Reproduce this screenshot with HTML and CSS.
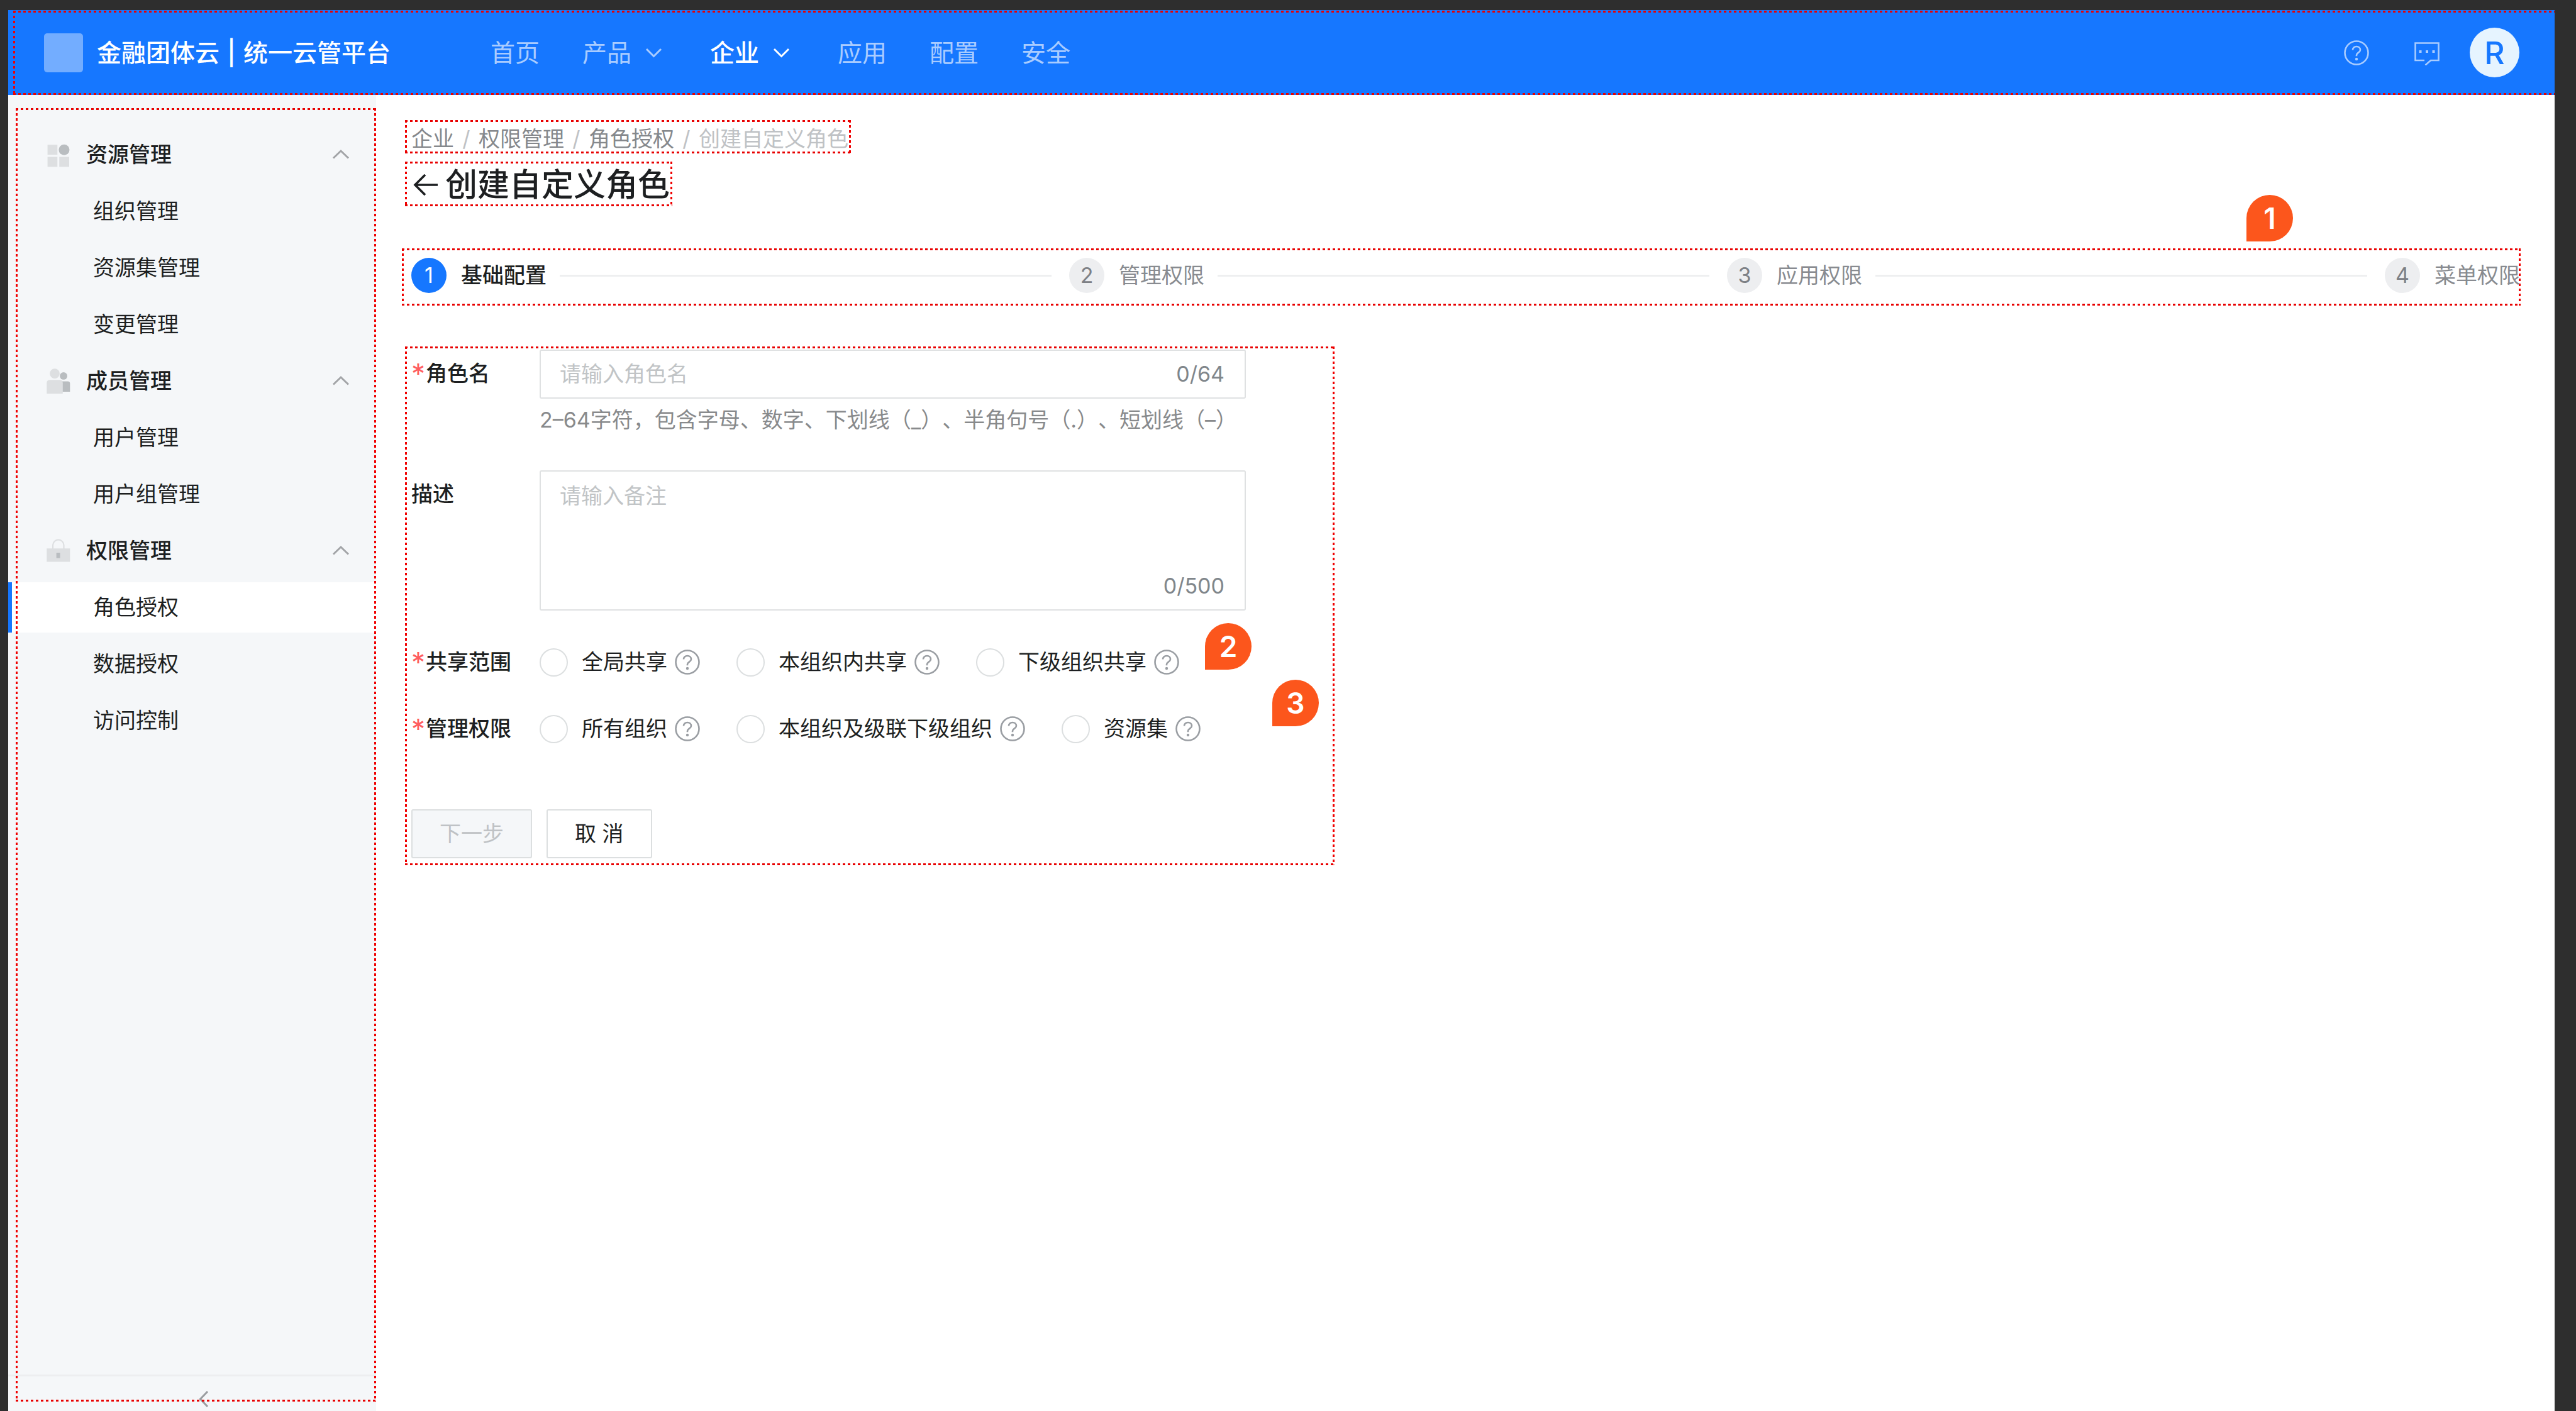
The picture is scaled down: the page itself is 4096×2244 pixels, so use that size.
FILE: index.html
```html
<!DOCTYPE html>
<html lang="zh-CN">
<head>
<meta charset="utf-8">
<title>创建自定义角色</title>
<link rel="stylesheet" href="styles.css">
</head>
<body>
<svg class="sprite" aria-hidden="true">
  <symbol id="help" viewBox="0 0 40 40">
    <circle cx="20" cy="20" r="18.5" fill="none" stroke="currentColor" stroke-width="2.6"/>
    <path d="M14 15.6c0-3.4 2.6-5.6 6-5.600s6 2.200 6 5.400c0 4-6 4.400-6 8.200v1.600" fill="none" stroke="currentColor" stroke-width="2.6"/>
    <circle cx="20" cy="30" r="2.2" fill="currentColor"/>
  </symbol>
  <symbol id="down" viewBox="0 0 37 20">
    <path d="M4 4l11.500 11.500L27 4" fill="none" stroke="currentColor" stroke-width="3"/>
  </symbol>
  <symbol id="up" viewBox="0 0 28 20">
    <path d="M2 15.500L14 4l12 11.500" fill="none" stroke="currentColor" stroke-width="3"/>
  </symbol>
</svg>
<div class="app">
  <header class="topbar outlined open-right">
    <div class="brand">
      <span class="logo"></span>
      <span class="brand-name">金融团体云<span class="bar">|</span>统一云管平台</span>
    </div>
    <nav class="topnav">
      <a href="#">首页</a>
      <a href="#">产品<svg class="caret"><use href="#down"/></svg></a>
      <a href="#" class="active">企业<svg class="caret"><use href="#down"/></svg></a>
      <a href="#">应用</a>
      <a href="#">配置</a>
      <a href="#">安全</a>
    </nav>
    <div class="tools">
      <button class="tool" aria-label="帮助"><svg class="icon"><use href="#help"/></svg></button>
      <button class="tool message" aria-label="消息"><svg class="icon" viewBox="0 0 40 40"><path d="M16 32H1.500V4.500h37V32H26L17.500 39.500" fill="none" stroke="currentColor" stroke-width="2.600"/><path d="M7.500 16h4v4h-4zM18 16h4v4h-4zM28.500 16h4v4h-4z" fill="currentColor"/></svg></button>
      <button class="avatar">R</button>
    </div>
  </header>
  <div class="body">
    <aside class="sidebar">
      <nav class="menu">
        <button class="group"><svg class="icon" viewBox="170 531 94 94"><path fill="#dddfe1" d="M176 541h37v37h-37zM176 586h37v37h-37zM220 586h37v37h-37z"/><circle cx="238" cy="560" r="20" fill="#b9bdc0"/></svg>资源管理<svg class="fold"><use href="#up"/></svg></button>
        <a href="#">组织管理</a>
        <a href="#">资源集管理</a>
        <a href="#">变更管理</a>
        <button class="group"><svg class="icon" viewBox="170 34 94 94"><circle cx="236" cy="62" r="14" fill="#b9bdc0"/><path fill="#b9bdc0" d="M228 82h24q8 0 8 8v31h-32z"/><circle cx="203" cy="53" r="18.500" fill="#dddfe1"/><path fill="#dddfe1" d="M173 128V89q0-12 12-12h36q12 0 12 12v39z"/></svg>成员管理<svg class="fold"><use href="#up"/></svg></button>
        <a href="#">用户管理</a>
        <a href="#">用户组管理</a>
        <button class="group"><svg class="icon" viewBox="170 666 94 94"><path d="M196 706v-14a20.500 20.500 0 0 1 41 0v14" fill="none" stroke="#dddfe1" stroke-width="5"/><path fill="#dddfe1" d="M173 704h87v50h-87z"/><path fill="#b9bdc0" d="M209 720h14v20h-14z"/></svg>权限管理<svg class="fold"><use href="#up"/></svg></button>
        <a href="#" class="current" aria-current="page">角色授权</a>
        <a href="#">数据授权</a>
        <a href="#">访问控制</a>
      </nav>
      <button class="collapse" aria-label="收起"><svg viewBox="0 0 16 26"><path d="M14 1L2.500 13 14 25" fill="none" stroke="currentColor" stroke-width="3"/></svg></button>
    </aside>
    <main class="main">
      <nav class="crumbs outlined">
        <a href="#">企业</a><span class="slash">/</span><a href="#">权限管理</a><span class="slash">/</span><a href="#">角色授权</a><span class="slash">/</span><span class="here">创建自定义角色</span>
      </nav>
      <div class="heading outlined">
        <a href="#" class="back" aria-label="返回"><svg viewBox="0 0 40 34"><path d="M40 17H3M20 1L4 17l16 16" fill="none" stroke="currentColor" stroke-width="3.600"/></svg></a>
        <h1>创建自定义角色</h1>
      </div>
      <ol class="steps outlined">
        <li class="on"><span class="num">1</span>基础配置</li>
        <li><span class="num">2</span>管理权限</li>
        <li><span class="num">3</span>应用权限</li>
        <li><span class="num">4</span>菜单权限</li>
        <li class="marker m1">1</li>
      </ol>
      <form class="form outlined">
        <div class="row">
          <label class="label required" for="name">角色名</label>
          <div class="field">
            <div class="box"><input id="name" type="text" placeholder="请输入角色名"><span class="count">0/64</span></div>
            <p class="hint">2–64字符，包含字母、数字、下划线（_）、半角句号（.）、短划线（–）</p>
          </div>
        </div>
        <div class="row desc">
          <label class="label" for="desc">描述</label>
          <div class="field">
            <div class="box area"><textarea id="desc" placeholder="请输入备注"></textarea><span class="count">0/500</span></div>
          </div>
        </div>
        <div class="row choices" role="radiogroup" aria-labelledby="share">
          <span class="label required" id="share">共享范围</span>
          <div class="options">
            <label><input type="radio" name="share">全局共享<svg class="icon"><use href="#help"/></svg></label>
            <label><input type="radio" name="share">本组织内共享<svg class="icon"><use href="#help"/></svg></label>
            <label><input type="radio" name="share">下级组织共享<svg class="icon"><use href="#help"/></svg></label>
          </div>
        </div>
        <div class="row choices" role="radiogroup" aria-labelledby="scope">
          <span class="label required" id="scope">管理权限</span>
          <div class="options">
            <label><input type="radio" name="scope">所有组织<svg class="icon"><use href="#help"/></svg></label>
            <label><input type="radio" name="scope">本组织及级联下级组织<svg class="icon"><use href="#help"/></svg></label>
            <label><input type="radio" name="scope">资源集<svg class="icon"><use href="#help"/></svg></label>
          </div>
        </div>
        <div class="actions">
          <button type="submit" class="next" disabled>下一步</button>
          <button type="button">取 消</button>
        </div>
        <span class="marker m2">2</span>
        <span class="marker m3">3</span>
      </form>
    </main>
  </div>
</div>
</body>
</html>
```

FILE: styles.css
```css
* { box-sizing: border-box; }

body {
  margin: 0;
  background: #2e2e2e;
  color: #1d1f21;
  font: 34px/48px Inter, "Noto Sans CJK SC", sans-serif;
  text-spacing-trim: space-all;
}

button, input, textarea { font: inherit; color: inherit; }
button { margin: 0; padding: 0; border: 0; background: none; }
a { color: inherit; text-decoration: none; }
svg { display: block; flex: none; }

.sprite { position: absolute; width: 0; height: 0; }
.icon { width: 40px; height: 40px; }

.app {
  display: flex;
  flex-direction: column;
  min-height: 100vh;
  padding: 16px 34px 0 13px;
}

/* Annotation frame drawn over a block */
.outlined { position: relative; }
.outlined::after,
.sidebar::after {
  content: "";
  position: absolute;
  inset: 0;
  pointer-events: none;
  --h: repeating-linear-gradient(90deg, #e80000 0 4px, transparent 4px 8px);
  --v: repeating-linear-gradient(180deg, #f00000 0 4px, transparent 4px 8px);
  background:
    var(--h) top / 100% 3px no-repeat,
    var(--h) bottom / 100% 3px no-repeat,
    var(--v) left / 3px 100% no-repeat,
    var(--v) right / 3px 100% no-repeat;
}
.open-right::after {
  inset: 1px 0 0 8px;
  background:
    var(--h) top / 100% 3px no-repeat,
    var(--h) bottom / 100% 3px no-repeat,
    var(--v) left / 3px 100% no-repeat;
}

/* Top bar */
.topbar {
  display: flex;
  align-items: center;
  height: 135px;
  padding: 0 56px 0 57px;
  background: #1677ff;
  color: #fff;
}
.brand { display: flex; align-items: center; gap: 22px; }
.logo { width: 62px; height: 62px; border-radius: 5px; background: #73adff; }
.brand-name { font-size: 39px; font-weight: 500; white-space: nowrap; }
.bar { display: inline-block; width: 38px; text-align: center; }
.topnav {
  display: flex;
  gap: 68px;
  margin-left: 159px;
  font-size: 39px;
  color: #a9ccff;
}
.topnav a { display: flex; align-items: center; }
.topnav .active { color: #fff; font-weight: 500; }
.caret { width: 37px; height: 20px; margin-left: 20px; }
.tools { display: flex; align-items: center; margin-left: auto; color: #a9ccff; }
.message { margin: 0 48px 0 72px; }
.avatar {
  width: 79px;
  height: 79px;
  border-radius: 50%;
  background: #e6f4ff;
  color: #1677ff;
  font-size: 50px;
  font-weight: 500;
}

.body { display: flex; flex: 1; background: #fff; }

/* Side menu */
.sidebar {
  position: relative;
  display: flex;
  flex-direction: column;
  flex: none;
  width: 585px;
  background: #f5f7f9;
}
.sidebar::after { inset: 21px 0 15px 12px; }
.menu { display: flex; flex-direction: column; gap: 10px; padding-top: 55px; }
.menu > * { display: flex; align-items: center; height: 80px; }
.menu a { padding-left: 135px; }
.menu .current { background: #fff; border-left: 6px solid #1677ff; padding-left: 129px; }
.group { gap: 24px; padding: 0 42px 0 60px; font-weight: 500; }
.fold { width: 28px; height: 20px; margin-left: auto; color: #a2a4a7; }
.collapse {
  display: flex;
  justify-content: center;
  height: 58px;
  margin-top: auto;
  padding: 23px 0 0 37px;
  border-top: 3px solid #edeef0;
  color: #9a9da0;
}
.collapse svg { width: 16px; height: 26px; }

/* Content */
.main { flex: 1; min-width: 0; padding: 40px 54px 40px 41px; }
.crumbs {
  display: flex;
  width: fit-content;
  height: 53px;
  margin-left: 5px;
  padding: 6px 4px 0 10px;
  color: #85888c;
}
.slash { width: 39px; text-align: center; color: #bfc2c5; }
.here { color: #bfc2c5; }
.heading {
  display: flex;
  align-items: center;
  gap: 12px;
  width: fit-content;
  height: 71px;
  margin: 13px 0 0 5px;
  padding: 2px 4px 0 12px;
}
.heading h1 { margin: 0; font-size: 51px; font-weight: 500; }
.back svg { width: 40px; height: 34px; }

.steps {
  display: flex;
  margin: 67px 0 0;
  padding: 15px 1px 20px 15px;
  list-style: none;
  color: #888b90;
}
.steps li { display: flex; align-items: center; white-space: nowrap; }
.steps li:nth-child(-n+3) { flex: 1; }
.steps li:nth-child(-n+3)::after {
  content: "";
  flex: 1;
  height: 3px;
  margin: 0 28px 0 21px;
  background: #eeeff0;
}
.num {
  display: grid;
  place-items: center;
  width: 56px;
  height: 56px;
  margin-right: 23px;
  border-radius: 50%;
  background: #edeef0;
  color: #7d8085;
}
.on { color: #1d1f21; font-weight: 500; }
.on .num { background: #1677ff; color: #fff; font-weight: 400; }

/* Form */
.form {
  max-width: 1478px;
  margin: 65px 0 0 5px;
  padding: 5px 141px 11px 10px;
}
.row { display: grid; grid-template-columns: 204px 1fr; }
.label { display: flex; font-weight: 500; padding-top: 14px; }
.required::before {
  content: "*";
  width: 23px;
  color: #ff5d5f;
  font-size: 44px;
  font-weight: 400;
}
.box {
  display: flex;
  align-items: center;
  height: 78px;
  padding: 0 32px 0 30px;
  border: 2px solid #dfe1e2;
  border-radius: 3px;
}
.box input,
.box textarea {
  flex: 1;
  min-width: 0;
  padding: 0;
  border: 0;
  outline: 0;
  background: none;
  resize: none;
}
::placeholder { color: #c1c4c6; opacity: 1; }
.count { color: #80868b; }
.hint { margin: 10px 0 0; color: #888a8c; white-space: nowrap; }
.desc { margin-top: 56px; }
.area { height: 223px; align-items: stretch; padding-top: 15px; padding-bottom: 13px; }
.area .count { align-self: flex-end; }
.choices { align-items: center; margin-top: 58px; }
.choices .label { padding: 0; }
.options { display: flex; gap: 58px; height: 48px; }
.options label { display: flex; align-items: center; white-space: nowrap; }
.options input {
  appearance: none;
  width: 45px;
  height: 45px;
  margin: 0 22px 0 0;
  border: 2px solid #dcdfe0;
  border-radius: 50%;
  background: #fff;
}
.options .icon { margin-left: 12px; color: #9a9ea3; }
.actions { display: flex; gap: 23px; margin-top: 104px; }
.actions button {
  height: 78px;
  padding: 0 43px;
  border: 2px solid #dcdfe0;
  border-radius: 3px;
  background: #fff;
}
.actions .next { background: #f5f7f9; color: #bfc2c5; }

/* Numbered annotation pins */
.marker {
  position: absolute;
  display: grid !important;
  place-items: center;
  width: 74px;
  height: 74px;
  border-radius: 50% 50% 50% 0;
  background: #fc561c;
  color: #fff;
  font-size: 46px;
  font-weight: 600;
}
.m1 { top: -85px; right: 362px; }
.m2 { top: 440px; left: 1272px; }
.m3 { top: 530px; left: 1379px; }
```
